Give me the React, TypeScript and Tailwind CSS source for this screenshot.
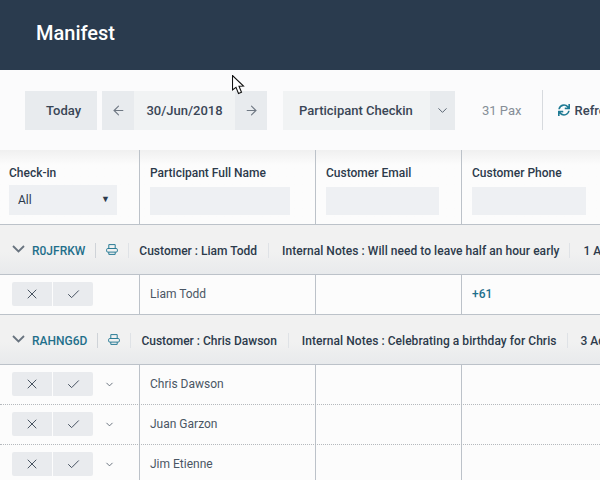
import { ChevronDown, X, Check, ArrowLeft, ArrowRight } from 'lucide-react';
import { FaSync } from 'react-icons/fa';

interface Participant {
  name: string;
  phone?: string;
}

interface Booking {
  ref: string;
  customer: string;
  notes: string;
  pax: string;
  expandable: boolean;
  participants: Participant[];
}

const bookings: Booking[] = [
  {
    ref: 'R0JFRKW',
    customer: 'Liam Todd',
    notes: 'Will need to leave half an hour early',
    pax: '1 Adult',
    expandable: false,
    participants: [{ name: 'Liam Todd', phone: '+61' }],
  },
  {
    ref: 'RAHNG6D',
    customer: 'Chris Dawson',
    notes: 'Celebrating a birthday for Chris',
    pax: '3 Adults',
    expandable: true,
    participants: [{ name: 'Chris Dawson' }, { name: 'Juan Garzon' }, { name: 'Jim Etienne' }],
  },
];

function GroupRow({ booking }: { booking: Booking }) {
  return (
    <div className="h-[50px] flex items-center pl-[12px] pt-[2px] bg-gradient-to-b from-[#f1f1f1] via-[#f1f1f1] via-[55%] to-[#e8eaec] border-b border-[#bcc2c9] whitespace-nowrap text-[12px] font-medium text-[#2c3a4b]">
      <svg width="13" height="8" viewBox="0 0 13 8" className="shrink-0 -mt-[4px]">
        <path d="M1 1 L6.5 6.5 L12 1" fill="none" stroke="#68737f" strokeWidth="1.8" />
      </svg>
      <span className="ml-[7px] text-[#1f6f8b]">{booking.ref}</span>
      <span className="ml-[10px] w-px h-[15px] bg-[#cfd3d8] shrink-0" />
      {/* print icon */}
      <svg width="12" height="11" viewBox="0 0 12 11" className="ml-[10px] -mt-[2px] shrink-0" fill="none" stroke="#2a7c96" strokeWidth="1">
        <path d="M2.8 4.5V0.6H9.2V4.5" />
        <rect x="0.6" y="4.5" width="10.8" height="3.6" rx="1.2" />
        <path d="M2.8 8.1V10.4H9.2V8.1" />
      </svg>
      <span className="ml-[10px] w-px h-[15px] bg-[#dfe2e6] shrink-0" />
      <span className="ml-[10px]">Customer : {booking.customer}</span>
      <span className="ml-[11px] w-px h-[15px] bg-[#dfe2e6] shrink-0" />
      <span className="ml-[13px] tracking-[0.05px]">Internal Notes : {booking.notes}</span>
      <span className="ml-[10px] w-px h-[15px] bg-[#dfe2e6] shrink-0" />
      <span className="ml-[13px]">{booking.pax}</span>
    </div>
  );
}

function ParticipantRow({ person, expandable, dotted }: { person: Participant; expandable: boolean; dotted: boolean }) {
  return (
    <div className={`h-[40px] flex bg-[#fcfcfc] border-b ${dotted ? 'border-dotted border-[#b5b9bd]' : 'border-[#bcc2c9]'}`}>
      <div className="w-[140px] shrink-0 border-r border-[#bcc2c9] flex items-center pl-[12px] pb-px">
        <button className="w-[40px] h-[24px] bg-[#e9ebee] rounded-l-[2px] flex items-center justify-center text-[#3c4856]">
          <X size={16} strokeWidth={1.4} />
        </button>
        <button className="w-[40px] h-[24px] ml-px bg-[#e9ebee] rounded-r-[2px] flex items-center justify-center text-[#3c4856]">
          <Check size={15} strokeWidth={1.5} />
        </button>
        {expandable && <ChevronDown size={11} strokeWidth={1.8} className="ml-[11px] text-[#4f5a67]" />}
      </div>
      <div className="w-[176px] shrink-0 border-r border-[#bcc2c9] flex items-center pl-[10px] pb-px text-[12px] text-[#4a5664]">
        {person.name}
      </div>
      <div className="w-[146px] shrink-0 border-r border-[#bcc2c9]" />
      <div className="flex-1 flex items-center pl-[10px] pb-px text-[12px] font-medium text-[#1f6f8b]">
        {person.phone}
      </div>
    </div>
  );
}

export default function App() {
  return (
    <div className="w-[600px] h-[480px] overflow-hidden relative bg-[#fcfcfc] font-['Roboto',sans-serif]">
      {/* Title bar */}
      <div className="h-[70px] bg-[#2a3b4e] flex items-center pl-[36px] pb-[4px]">
        <h1 className="text-[20px] font-medium text-white">Manifest</h1>
      </div>

      {/* Toolbar */}
      <div className="h-[80px] bg-[#fbfbfc] flex items-center pl-[25px] whitespace-nowrap text-[13px] font-medium text-[#3a4656]">
        <button className="w-[72px] h-[39px] shrink-0 bg-[#e8ebee] pt-px pl-[5px]">Today</button>
        <div className="ml-[5px] flex h-[39px] shrink-0">
          <button className="w-[32px] bg-[#e8ebee] flex items-center justify-center text-[#6f7883]">
            <ArrowLeft size={15} strokeWidth={1.7} />
          </button>
          <div className="w-[101px] bg-[#f1f3f4] flex items-center justify-center pt-px">30/Jun/2018</div>
          <button className="w-[32px] bg-[#e8ebee] flex items-center justify-center text-[#6f7883]">
            <ArrowRight size={15} strokeWidth={1.7} />
          </button>
        </div>
        <div className="ml-[16px] flex h-[39px] shrink-0">
          <div className="w-[147px] bg-[#f1f3f4] flex items-center pl-[16px] pt-px">Participant Checkin</div>
          <div className="w-[25px] bg-[#e8ebee] flex items-center justify-center text-[#5b6673]">
            <ChevronDown size={15} strokeWidth={1.6} />
          </div>
        </div>
        <span className="ml-[27px] pt-px font-normal text-[#868e97] shrink-0">31 Pax</span>
        <span className="ml-[20px] w-px h-[40px] bg-[#d7dade] shrink-0" />
        <FaSync size={12} className="ml-[15px] text-[#1f7a94] shrink-0" />
        <span className="ml-[5px] pt-px shrink-0">Refresh</span>
      </div>

      {/* Filter header */}
      <div className="h-[75px] flex border-b border-[#bcc2c9] bg-gradient-to-b from-[#f0f0f0] to-[#fcfcfc] to-[20%] text-[12px] font-medium text-[#2c3a4b]">
        <div className="w-[140px] shrink-0 border-r border-[#bcc2c9] pl-[9px] pt-[16px]">
          <div className="leading-[14px]">Check-in</div>
          <div className="mt-[5px] w-[108px] h-[30px] bg-[#eef0f3] flex items-center justify-between pl-[9px] pr-[7px] font-normal text-[#2c3a4b]">
            <span>All</span>
            <span className="text-[9px]">▼</span>
          </div>
        </div>
        <div className="w-[176px] shrink-0 border-r border-[#bcc2c9] pl-[10px] pt-[16px]">
          <div className="leading-[14px]">Participant Full Name</div>
          <div className="mt-[7px] w-[140px] h-[28px] bg-[#eef0f3]" />
        </div>
        <div className="w-[146px] shrink-0 border-r border-[#bcc2c9] pl-[10px] pt-[16px]">
          <div className="leading-[14px]">Customer Email</div>
          <div className="mt-[7px] w-[113px] h-[28px] bg-[#eef0f3]" />
        </div>
        <div className="flex-1 pl-[10px] pt-[16px]">
          <div className="leading-[14px]">Customer Phone</div>
          <div className="mt-[7px] w-[114px] h-[28px] bg-[#eef0f3]" />
        </div>
      </div>

      {/* Bookings */}
      {bookings.map((booking) => (
        <div key={booking.ref}>
          <GroupRow booking={booking} />
          {booking.participants.map((person) => (
            <ParticipantRow
              key={person.name}
              person={person}
              expandable={booking.expandable}
              dotted={booking.expandable}
            />
          ))}
        </div>
      ))}

      {/* Mouse pointer */}
      <svg className="absolute left-[232px] top-[75px]" width="13" height="20" viewBox="0 0 13 20">
        <path d="M0.5 0.5 L0.5 15 L4 12.3 L6.5 18.5 L9.5 17.3 L7 11.3 L11.5 11 Z" fill="#fff" stroke="#111" strokeWidth="1.1" />
      </svg>
    </div>
  );
}
